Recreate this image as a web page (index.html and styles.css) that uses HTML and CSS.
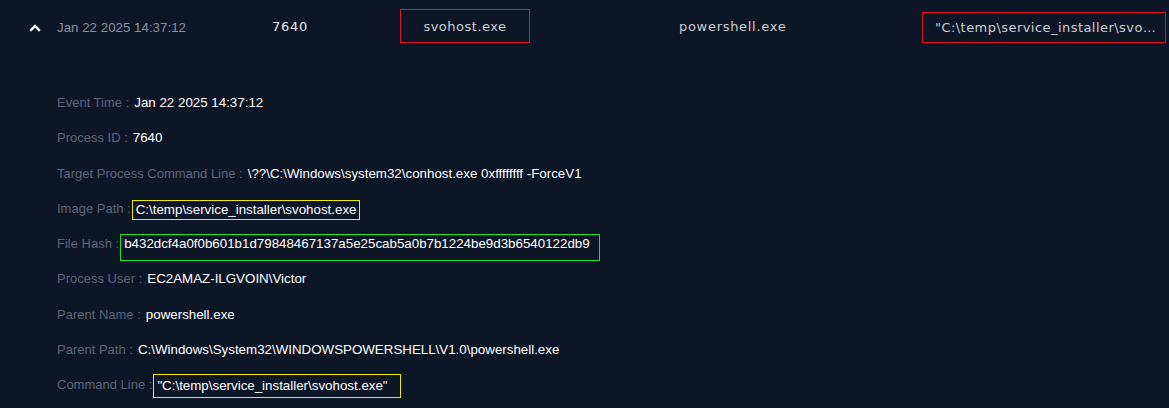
FILE: index.html
```html
<!DOCTYPE html>
<html>
<head>
<meta charset="utf-8">
<link rel="stylesheet" href="styles.css">
</head>
<body>
<div class="event">
  <div class="summary">
    <div class="toggle">
      <svg width="12" height="8" viewBox="0 0 12 8"><path d="M1.2 6.8 L6 2 L10.8 6.8" fill="none" stroke="#ffffff" stroke-width="2.4"/></svg>
    </div>
    <div class="cell date">Jan 22 2025 14:37:12</div>
    <div class="cell pid">7640</div>
    <div class="cell image boxed-red">svohost.exe</div>
    <div class="cell parent">powershell.exe</div>
    <div class="cell cmd boxed-red">"C:\temp\service_installer\svohost.exe"</div>
  </div>
  <div class="details">
    <div class="row"><span class="label">Event Time :</span><span class="value">Jan 22 2025 14:37:12</span></div>
    <div class="row"><span class="label">Process ID :</span><span class="value">7640</span></div>
    <div class="row"><span class="label">Target Process Command Line :</span><span class="value">\??\C:\Windows\system32\conhost.exe 0xffffffff -ForceV1</span></div>
    <div class="row"><span class="label">Image Path :</span><span class="value box box-yellow box-image">C:\temp\service_installer\svohost.exe</span></div>
    <div class="row"><span class="label">File Hash :</span><span class="value box box-green box-hash">b432dcf4a0f0b601b1d79848467137a5e25cab5a0b7b1224be9d3b6540122db9</span></div>
    <div class="row"><span class="label">Process User :</span><span class="value">EC2AMAZ-ILGVOIN\Victor</span></div>
    <div class="row"><span class="label">Parent Name :</span><span class="value">powershell.exe</span></div>
    <div class="row"><span class="label">Parent Path :</span><span class="value">C:\Windows\System32\WINDOWSPOWERSHELL\V1.0\powershell.exe</span></div>
    <div class="row"><span class="label">Command Line :</span><span class="value box box-yellow box-cmd">"C:\temp\service_installer\svohost.exe"</span></div>
  </div>
</div>
</body>
</html>
```

FILE: styles.css
```css
html, body {
  margin: 0;
  padding: 0;
  background: #0d1626;
}
body {
  width: 1169px;
  height: 408px;
  overflow: hidden;
  font-family: "Liberation Sans", Arial, sans-serif;
  font-size: 13.33px;
}
.summary {
  display: flex;
  align-items: center;
  height: 52px;
  padding-left: 29px;
}
.toggle {
  width: 28px;
  height: 8px;
  display: flex;
  align-items: center;
  margin-top: 4px;
}
.toggle svg { display: block; }
.cell {
  font-family: "DejaVu Sans", sans-serif;
  font-size: 13px;
  letter-spacing: 0.7px;
  color: #c9cdd4;
  white-space: nowrap;
}
.date {
  font-family: "Liberation Sans", Arial, sans-serif;
  font-size: 13.33px;
  letter-spacing: 0;
  color: #8790a2;
  width: 215px;
  margin-top: 3px;
}
.pid {
  width: 128px;
  color: #e8e8ea;
}
.boxed-red {
  border: 1px solid #e3111b;
  box-sizing: border-box;
}
.image {
  width: 130px;
  height: 34px;
  display: flex;
  align-items: center;
  justify-content: center;
  letter-spacing: 0.5px;
}
.parent {
  width: 392px;
  padding-left: 149px;
  box-sizing: border-box;
}
.cmd {
  width: 244px;
  height: 31px;
  line-height: 29px;
  padding: 0 5px 0 12px;
  letter-spacing: 0.45px;
  overflow: hidden;
  text-overflow: ellipsis;
  margin-top: 2px;
}
.details {
  padding: 33px 0 0 57px;
}
.row {
  display: flex;
  align-items: flex-start;
  height: 35.25px;
  padding-top: 8px;
  box-sizing: border-box;
  white-space: nowrap;
}
.label {
  color: #5b6579;
  font-size: 13px;
  line-height: 20px;
  margin-right: 5px;
}
.value {
  color: #ffffff;
  line-height: 20px;
}
.box {
  border: 1px solid;
  line-height: 18px;
  box-sizing: border-box;
}
.box-yellow { border-color: #f2ea00; }
.box-green { border-color: #1ee31e; }
.box-image {
  margin-left: -4px;
  margin-top: 1px;
  padding: 0 3px 0 3px;
}
.box-hash {
  margin-left: -4px;
  width: 480px;
  height: 27px;
  padding: 0 3px;
}
.box-cmd {
  margin-left: -4px;
  margin-top: -1px;
  width: 248px;
  height: 24px;
  padding: 2px 3px;
}
```
